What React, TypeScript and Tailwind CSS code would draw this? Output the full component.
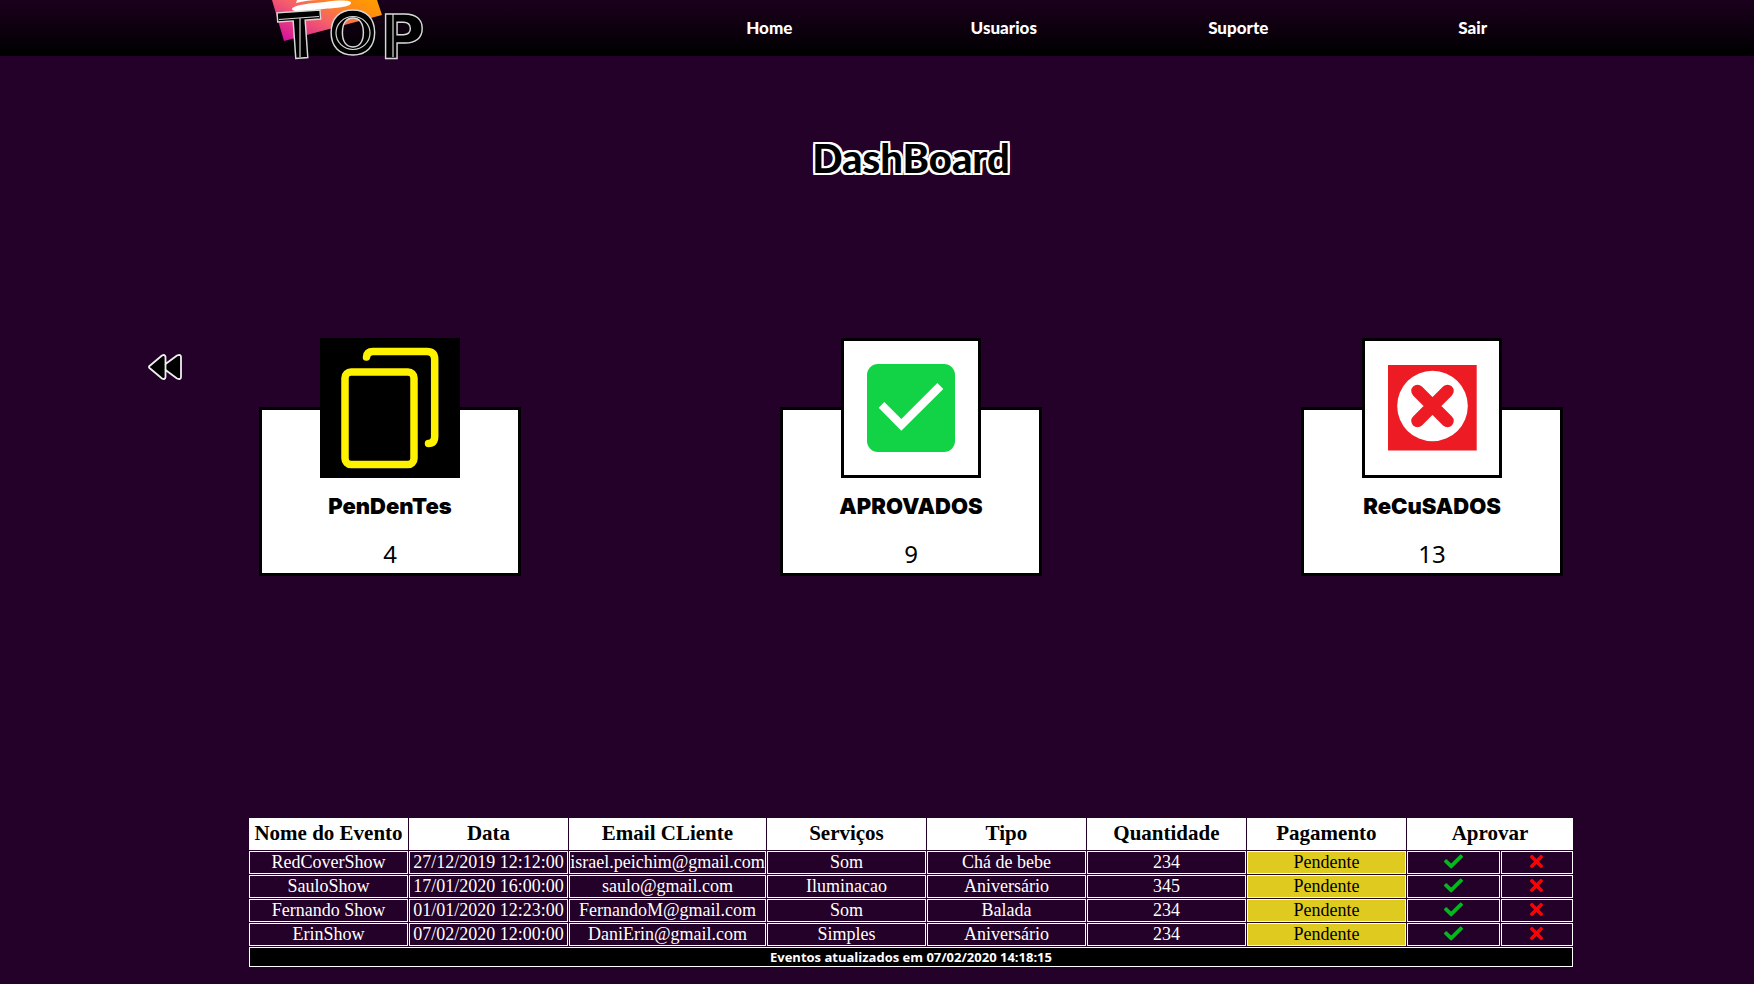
import type { ReactNode } from "react";
import { FaCheck, FaTimes } from "react-icons/fa";

const navLinks = ["Home", "Usuarios", "Suporte", "Sair"];

const headings = ["Nome do Evento", "Data", "Email CLiente", "Serviços", "Tipo", "Quantidade", "Pagamento"];

const events = [
  ["RedCoverShow", "27/12/2019 12:12:00", "israel.peichim@gmail.com", "Som", "Chá de bebe", "234"],
  ["SauloShow", "17/01/2020 16:00:00", "saulo@gmail.com", "Iluminacao", "Aniversário", "345"],
  ["Fernando Show", "01/01/2020 12:23:00", "FernandoM@gmail.com", "Som", "Balada", "234"],
  ["ErinShow", "07/02/2020 12:00:00", "DaniErin@gmail.com", "Simples", "Aniversário", "234"],
];

function Logo() {
  return (
    <svg width="160" height="60" viewBox="264 0 160 60" role="img" aria-label="Top" className="block shrink-0 overflow-visible">
      <defs>
        <linearGradient id="flare" x1="0" y1="0.8" x2="1" y2="0.1">
          <stop offset="0" stopColor="#d4149b" />
          <stop offset="0.45" stopColor="#f5606a" />
          <stop offset="0.8" stopColor="#ff8c12" />
          <stop offset="1" stopColor="#ff9d00" />
        </linearGradient>
      </defs>
      <path d="M272 0H377L382 15L284 41Z" fill="url(#flare)" />
      <path d="M296 3Q308 0 318 0H297Z" fill="#fff" />
      <path d="M292 9C293 5 312 3 325 2C340 0 351 0 351 3C351 7 335 8 323 9C309 11 292 13 292 9Z" fill="#fff" />
      <g fill="#000" stroke="#d8d8d8" strokeWidth="1.4" fontWeight="700" fontFamily="'DejaVu Sans', sans-serif">
        <text x="300" y="58" fontSize="64" textAnchor="middle" transform="rotate(-4 300 34)">T</text>
        <text x="353" y="54" fontSize="58" textAnchor="middle">O</text>
        <text x="380" y="58" fontSize="61">P</text>
      </g>
      <g fill="none" stroke="#d8d8d8" strokeWidth="1.2">
        <path d="M279 19.500L319 16.500M300 18V57M393 14V57" />
        <ellipse cx="353" cy="33" rx="17" ry="16.500" />
      </g>
    </svg>
  );
}

function PendingIcon() {
  return (
    <svg viewBox="0 0 140 140" className="size-full" fill="none" stroke="#fff200" strokeWidth="7.5" strokeLinecap="round" aria-hidden="true">
      <rect x="25" y="34" width="69" height="92.500" rx="6" />
      <path d="M46.500 19Q47 13.500 53 13.500H107Q114.700 13.500 114.700 21.500V98Q114.700 105.500 108.500 105.500" />
    </svg>
  );
}

function ApprovedIcon() {
  return (
    <svg viewBox="0 0 140 140" className="size-full" aria-hidden="true">
      <rect x="26" y="26" width="88" height="88" rx="11" fill="#12d346" />
      <path d="M37.700 69.700L43.300 64L60.300 81L96.300 45L102.300 51L60.300 92.700Z" fill="#fff" />
    </svg>
  );
}

function RefusedIcon() {
  return (
    <svg viewBox="0 0 140 140" className="size-full" aria-hidden="true">
      <rect x="26" y="27" width="88.700" height="85.500" fill="#ed1c24" />
      <circle cx="70.500" cy="68" r="35.300" fill="#fff" />
      <path d="M55.500 53L85.500 83M85.500 53L55.500 83" stroke="#ed1c24" strokeWidth="12.500" strokeLinecap="round" />
    </svg>
  );
}

function StatCard({ title, value, icon, dark }: { title: string; value: number; icon: ReactNode; dark?: boolean }) {
  return (
    <article className="flex w-[262px] flex-col items-center">
      <div className={`z-10 -mb-[71px] size-[140px] ${dark ? "bg-black" : "bg-white outline-3 -outline-offset-3 outline-black"}`}>
        {icon}
      </div>
      <div className="w-full border-3 border-black bg-white pt-20 pb-[3px] text-center text-2xl/8 text-black">
        <h2 className="mb-4 font-[Inter] text-[22px]/8 font-black">{title}</h2>
        <p className="font-['Noto_Sans']">{value}</p>
      </div>
    </article>
  );
}

export default function App() {
  return (
    <div className="min-h-screen bg-[#240128] font-['Liberation_Serif',serif]">
      <header className="flex h-14 items-start justify-between bg-linear-to-b/srgb from-[#1b001d] to-black pr-[164px] pl-[264px]">
        <Logo />
        <nav className="grid h-full w-[938px] grid-cols-4 items-center text-center font-[Lato] text-[17px]/6 font-black text-white">
          {navLinks.map((label) => (
            <a key={label} href="#">{label}</a>
          ))}
        </nav>
      </header>

      <main className="pt-[78px] pb-4 pl-[68px]">
        <h1 className="text-center font-[Lato] text-[40px]/[48px] font-black text-black [text-shadow:2px_0_#fff,-2px_0_#fff,0_2px_#fff,0_-2px_#fff,2px_2px_#fff,-2px_-2px_#fff,2px_-2px_#fff,-2px_2px_#fff]">
          DashBoard
        </h1>

        <section className="mt-[156px] grid grid-cols-[1fr_minmax(0,1304px)_1fr]">
          <button type="button" aria-label="Voltar" className="mt-4 ml-20 self-start justify-self-start">
            <svg width="34" height="26" viewBox="0 0 34 26" fill="#000" stroke="#eee" strokeWidth="1.800" strokeLinejoin="round" aria-hidden="true">
              <path d="M1.500 12Q0.500 13 1.500 14L14 24.500Q17 26 17.500 23V16L29 24.500Q33 26 33 23V3Q33 0 29 1.500L17.500 10V3Q17 0 14 1.500Z" />
              <path d="M17.500 10V16" />
            </svg>
          </button>
          <div className="flex justify-between">
            <StatCard title="PenDenTes" value={4} icon={<PendingIcon />} dark />
            <StatCard title="APROVADOS" value={9} icon={<ApprovedIcon />} />
            <StatCard title="ReCuSADOS" value={13} icon={<RefusedIcon />} />
          </div>
        </section>

        <table className="mx-auto mt-[241px] w-full max-w-[1326px] table-fixed border-separate border-spacing-px text-center text-white">
          <colgroup>
            <col />
            <col />
            <col className="w-[197px]" />
            <col />
            <col />
            <col />
            <col />
            <col className="w-[93px]" />
            <col className="w-[72px]" />
          </colgroup>
          <thead>
            <tr className="text-[21px]/[30px] text-black">
              {headings.map((label) => (
                <th key={label} scope="col" className="bg-white p-0 pb-0.5">{label}</th>
              ))}
              <th scope="colgroup" colSpan={2} className="bg-white p-0 pb-0.5">Aprovar</th>
            </tr>
          </thead>
          <tbody className="text-lg/[21px]">
            {events.map((row) => (
              <tr key={row[0]}>
                {row.map((value, i) => (
                  <td key={i} className="border border-white p-0 whitespace-nowrap">{value}</td>
                ))}
                <td className="border border-white bg-[#dfca1f] p-0 text-black">Pendente</td>
                <td className="border border-white p-0">
                  <button type="button" aria-label={`Aprovar ${row[0]}`} className="block w-full pb-0.5 text-[#00b91b]">
                    <FaCheck className="mx-auto size-[19px]" />
                  </button>
                </td>
                <td className="border border-white p-0">
                  <button type="button" aria-label={`Recusar ${row[0]}`} className="block w-full pb-0.5 text-[#ff0000]">
                    <FaTimes className="mx-auto size-[19px]" />
                  </button>
                </td>
              </tr>
            ))}
          </tbody>
          <tfoot>
            <tr>
              <td colSpan={9} className="border border-white bg-black p-0 font-['Open_Sans'] text-[13px]/[18px] font-bold">
                Eventos atualizados em 07/02/2020 14:18:15
              </td>
            </tr>
          </tfoot>
        </table>
      </main>
    </div>
  );
}
